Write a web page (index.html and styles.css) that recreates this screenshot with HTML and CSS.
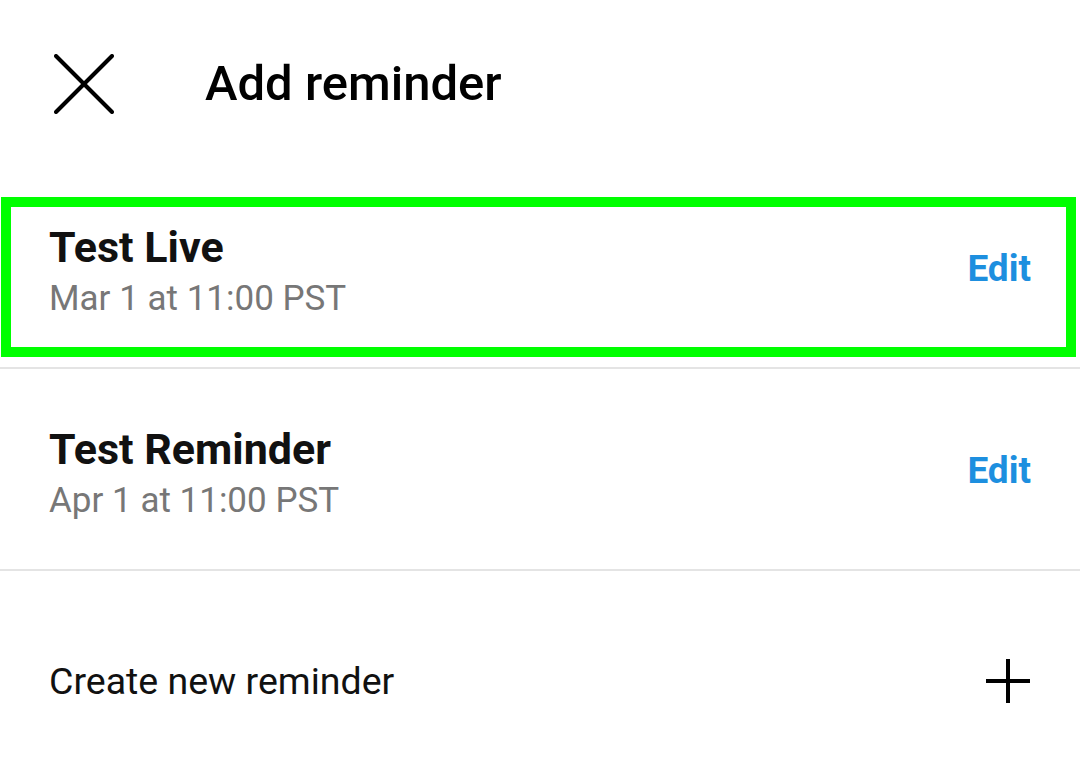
FILE: index.html
```html
<!DOCTYPE html>
<html lang="en">
<head>
<meta charset="utf-8">
<title>Add reminder</title>
<link rel="stylesheet" href="styles.css">
</head>
<body>
<div class="screen">
  <header class="header">
    <svg class="close-icon" width="60" height="60" viewBox="0 0 60 60" aria-hidden="true">
      <line x1="2" y1="2" x2="58" y2="58" />
      <line x1="58" y1="2" x2="2" y2="58" />
    </svg>
    <h1 class="title">Add reminder</h1>
  </header>

  <div class="row row-highlighted">
    <div class="row-text">
      <div class="row-title">Test Live</div>
      <div class="row-date">Mar 1 at 11:00 PST</div>
    </div>
    <span class="edit">Edit</span>
    <div class="highlight-box"></div>
  </div>

  <div class="row">
    <div class="row-text">
      <div class="row-title">Test Reminder</div>
      <div class="row-date">Apr 1 at 11:00 PST</div>
    </div>
    <span class="edit">Edit</span>
  </div>

  <div class="create-row">
    <span class="create-label">Create new reminder</span>
    <svg class="plus-icon" width="44" height="44" viewBox="0 0 44 44" aria-hidden="true">
      <line x1="22" y1="0" x2="22" y2="44" />
      <line x1="0" y1="22" x2="44" y2="22" />
    </svg>
  </div>
</div>
</body>
</html>
```

FILE: styles.css
```css
html, body {
  margin: 0;
  padding: 0;
  background: #ffffff;
  overflow: hidden;
}

body {
  font-family: Roboto, "Liberation Sans", Arial, sans-serif;
  color: #000000;
}

.screen {
  width: 1080px;
  height: 771px;
  display: flex;
  flex-direction: column;
}

.header {
  flex-shrink: 0;
  height: 167px;
  display: flex;
  align-items: center;
  padding-left: 54px;
  gap: 91px;
}

.close-icon line {
  stroke: #000;
  stroke-width: 4;
  stroke-linecap: round;
}

.title {
  margin: 0;
  font-size: 49px;
  font-weight: 500;
  color: #000;
  letter-spacing: 0;
}

.row {
  flex-shrink: 0;
  position: relative;
  height: 202px;
  box-sizing: border-box;
  display: flex;
  justify-content: space-between;
  align-items: flex-start;
  padding: 0 49px;
  border-bottom: 2px solid #e4e4e4;
}

.row-text {
  padding-top: 55px;
  display: flex;
  flex-direction: column;
}

.row-title {
  font-size: 43px;
  line-height: 50px;
  font-weight: 700;
  color: #111;
}

.row-date {
  margin-top: 7px;
  font-size: 35px;
  line-height: 40px;
  font-weight: 400;
  color: #777777;
}

.edit {
  align-self: center;
  margin-top: 4px;
  font-size: 37px;
  line-height: 44px;
  font-weight: 700;
  color: #1d8fdf;
}

.highlight-box {
  position: absolute;
  top: 30px;
  left: 1px;
  right: 4px;
  bottom: 10px;
  border: 10px solid #00ff00;
  pointer-events: none;
}

.create-row {
  flex-shrink: 0;
  height: 220px;
  display: flex;
  align-items: center;
  justify-content: space-between;
  padding: 0 50px 0 49px;
}

.create-label {
  font-size: 37.5px;
  font-weight: 400;
  color: #111;
}

.plus-icon line {
  stroke: #000;
  stroke-width: 4;
}
```
